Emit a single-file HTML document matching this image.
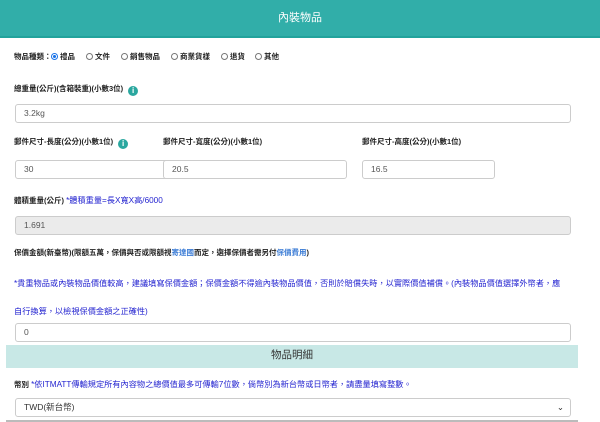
<!DOCTYPE html><html><head><meta charset="utf-8"><style>
body{margin:0;width:600px;height:422px;overflow:hidden;background:#fff;font-family:"Liberation Sans","Noto Sans CJK TC",sans-serif;font-size:8px;color:#222;position:relative}
.a{position:absolute;white-space:nowrap}
.lb{font-weight:bold;font-size:7.5px;color:#222}
.hdr{left:0;top:0;width:600px;height:36px;background:#31aea9;border-bottom:2px solid #22a39c;color:#fff;font-size:11px;text-align:center;line-height:36px}
.in{position:absolute;height:19px;border:1px solid #ccc;border-radius:3px;box-sizing:border-box;padding-left:8px;line-height:17px;color:#555;font-size:8.5px;background:#fff}
.r{display:inline-block;width:7px;height:7px;border:1px solid #777;border-radius:50%;vertical-align:-1px;margin-right:2px;box-sizing:border-box}
.r.on{border-color:#1a73e8;background:radial-gradient(#1a73e8 40%,#fff 45%)}
.i{display:inline-block;width:10px;height:10px;border-radius:50%;background:#2aa79f;color:#fff;font-size:8px;line-height:10px;text-align:center;font-weight:bold;vertical-align:-2px;margin-left:5px}
.b{color:#2424d0;font-weight:normal;font-size:8.2px}.l{color:#3a7bd5}
</style></head><body>
<div class="a hdr">內裝物品</div>
<div class="a lb" style="left:14px;top:51px">物品種類：</div>
<div class="a lb" style="left:51px;top:51px"><span class="r on"></span>禮品</div>
<div class="a lb" style="left:86px;top:51px"><span class="r"></span>文件</div>
<div class="a lb" style="left:121px;top:51px"><span class="r"></span>銷售物品</div>
<div class="a lb" style="left:171px;top:51px"><span class="r"></span>商業貨樣</div>
<div class="a lb" style="left:221px;top:51px"><span class="r"></span>退貨</div>
<div class="a lb" style="left:255px;top:51px"><span class="r"></span>其他</div>
<div class="a lb" style="left:14px;top:83px">總重量(公斤)(含箱裝重)(小數3位)<span class="i">i</span></div>
<div class="in" style="left:15px;top:104px;width:556px">3.2kg</div>
<div class="a lb" style="left:14px;top:136px">郵件尺寸-長度(公分)(小數1位)<span class="i">i</span></div>
<div class="a lb" style="left:162px;top:136px;left:163px">郵件尺寸-寬度(公分)(小數1位)</div>
<div class="a lb" style="left:362px;top:136px">郵件尺寸-高度(公分)(小數1位)</div>
<div class="in" style="left:15px;top:160px;width:154px">30</div>
<div class="in" style="left:163px;top:160px;width:184px">20.5</div>
<div class="in" style="left:362px;top:160px;width:133px">16.5</div>
<div class="a lb" style="left:14px;top:194px">體積重量(公斤) <span class="b">*體積重量=長X寬X高/6000</span></div>
<div class="in" style="left:15px;top:216px;width:556px;background:#ebebeb">1.691</div>
<div class="a lb" style="left:14px;top:247px">保價金額(新臺幣)(限額五萬，保價與否或限額視<span class="l">寄達國</span>而定，選擇保價者需另付<span class="l">保價費用</span>)</div>
<div class="a b" style="left:14px;top:277px">*貴重物品或內裝物品價值較高，建議填寫保價金額；保價金額不得逾內裝物品價值，否則於賠償失時，以實際價值補償。(內裝物品價值選擇外幣者，應</div>
<div class="a b" style="left:14px;top:305px">自行換算，以檢視保價金額之正確性)</div>
<div class="in" style="left:15px;top:323px;width:556px">0</div>
<div class="a" style="left:6px;top:345px;width:572px;height:23px;background:#c8e8e6;text-align:center;line-height:21px;font-size:10.5px;color:#333">物品明細</div>
<div class="a lb" style="left:14px;top:378px">幣別 <span class="b">*依ITMATT傳輸規定所有內容物之總價值最多可傳輸7位數，倘幣別為新台幣或日幣者，請盡量填寫整數。</span></div>
<div class="in" style="left:15px;top:398px;width:556px;color:#333">TWD(新台幣)<span style="position:absolute;right:6px;top:0">⌄</span></div>
<div class="a" style="left:6px;top:420px;width:572px;height:2px;background:#bbb"></div>
</body></html>
